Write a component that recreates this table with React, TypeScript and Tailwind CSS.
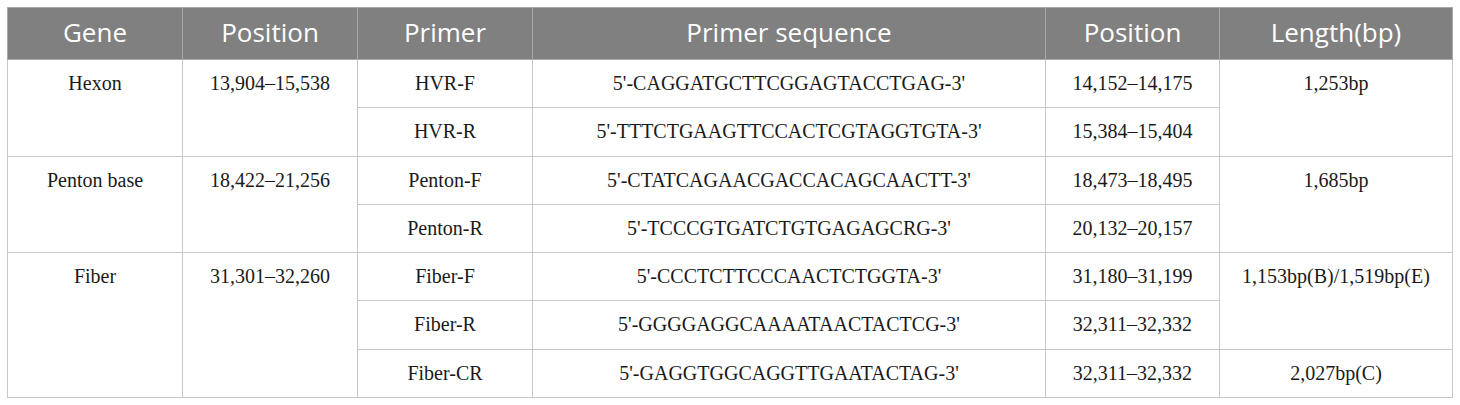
const cell = 'border border-[#c8c8c8] text-center align-top pt-[10px] pb-0 px-2';

type Row = {
  gene?: { text: string; pos: string; span: number };
  primer: string;
  seq: string;
  pos: string;
  len?: { text: string; span: number };
};

const rows: Row[] = [
  { gene: { text: 'Hexon', pos: '13,904–15,538', span: 2 }, primer: 'HVR-F', seq: "5'-CAGGATGCTTCGGAGTACCTGAG-3'", pos: '14,152–14,175', len: { text: '1,253bp', span: 2 } },
  { primer: 'HVR-R', seq: "5'-TTTCTGAAGTTCCACTCGTAGGTGTA-3'", pos: '15,384–15,404' },
  { gene: { text: 'Penton base', pos: '18,422–21,256', span: 2 }, primer: 'Penton-F', seq: "5'-CTATCAGAACGACCACAGCAACTT-3'", pos: '18,473–18,495', len: { text: '1,685bp', span: 2 } },
  { primer: 'Penton-R', seq: "5'-TCCCGTGATCTGTGAGAGCRG-3'", pos: '20,132–20,157' },
  { gene: { text: 'Fiber', pos: '31,301–32,260', span: 3 }, primer: 'Fiber-F', seq: "5'-CCCTCTTCCCAACTCTGGTA-3'", pos: '31,180–31,199', len: { text: '1,153bp(B)/1,519bp(E)', span: 2 } },
  { primer: 'Fiber-R', seq: "5'-GGGGAGGCAAAATAACTACTCG-3'", pos: '32,311–32,332' },
  { primer: 'Fiber-CR', seq: "5'-GAGGTGGCAGGTTGAATACTAG-3'", pos: '32,311–32,332', len: { text: '2,027bp(C)', span: 1 } },
];

const headers = ['Gene', 'Position', 'Primer', 'Primer sequence', 'Position', 'Length(bp)'];

export default function App() {
  return (
    <div className="bg-white w-[1460px] h-[405px] pt-[7px] pl-[7px]">
      <table className="border-collapse table-fixed w-[1445px] border border-[#c8c8c8] text-[#1a1a1a] text-[20px] leading-[27px] font-['Liberation_Serif',serif]">
        <colgroup>
          <col className="w-[175px]" />
          <col className="w-[175px]" />
          <col className="w-[175px]" />
          <col className="w-[513px]" />
          <col className="w-[174px]" />
          <col className="w-[233px]" />
        </colgroup>
        <thead>
          <tr className="h-[52px] bg-[#7f807f]">
            {headers.map((h, i) => (
              <th
                key={i}
                className="border border-[#a9a9a9] text-white font-normal text-[26px] leading-[30px] font-['Open_Sans',sans-serif] text-center align-middle pb-[3px]"
              >
                {h}
              </th>
            ))}
          </tr>
        </thead>
        <tbody>
          {rows.map((r, i) => (
            <tr key={i} className="h-[48.3px]">
              {r.gene && (
                <>
                  <td rowSpan={r.gene.span} className={cell}>{r.gene.text}</td>
                  <td rowSpan={r.gene.span} className={cell}>{r.gene.pos}</td>
                </>
              )}
              <td className={cell}>{r.primer}</td>
              <td className={cell}>{r.seq}</td>
              <td className={cell}>{r.pos}</td>
              {r.len && (
                <td rowSpan={r.len.span} className={cell}>{r.len.text}</td>
              )}
            </tr>
          ))}
        </tbody>
      </table>
    </div>
  );
}
